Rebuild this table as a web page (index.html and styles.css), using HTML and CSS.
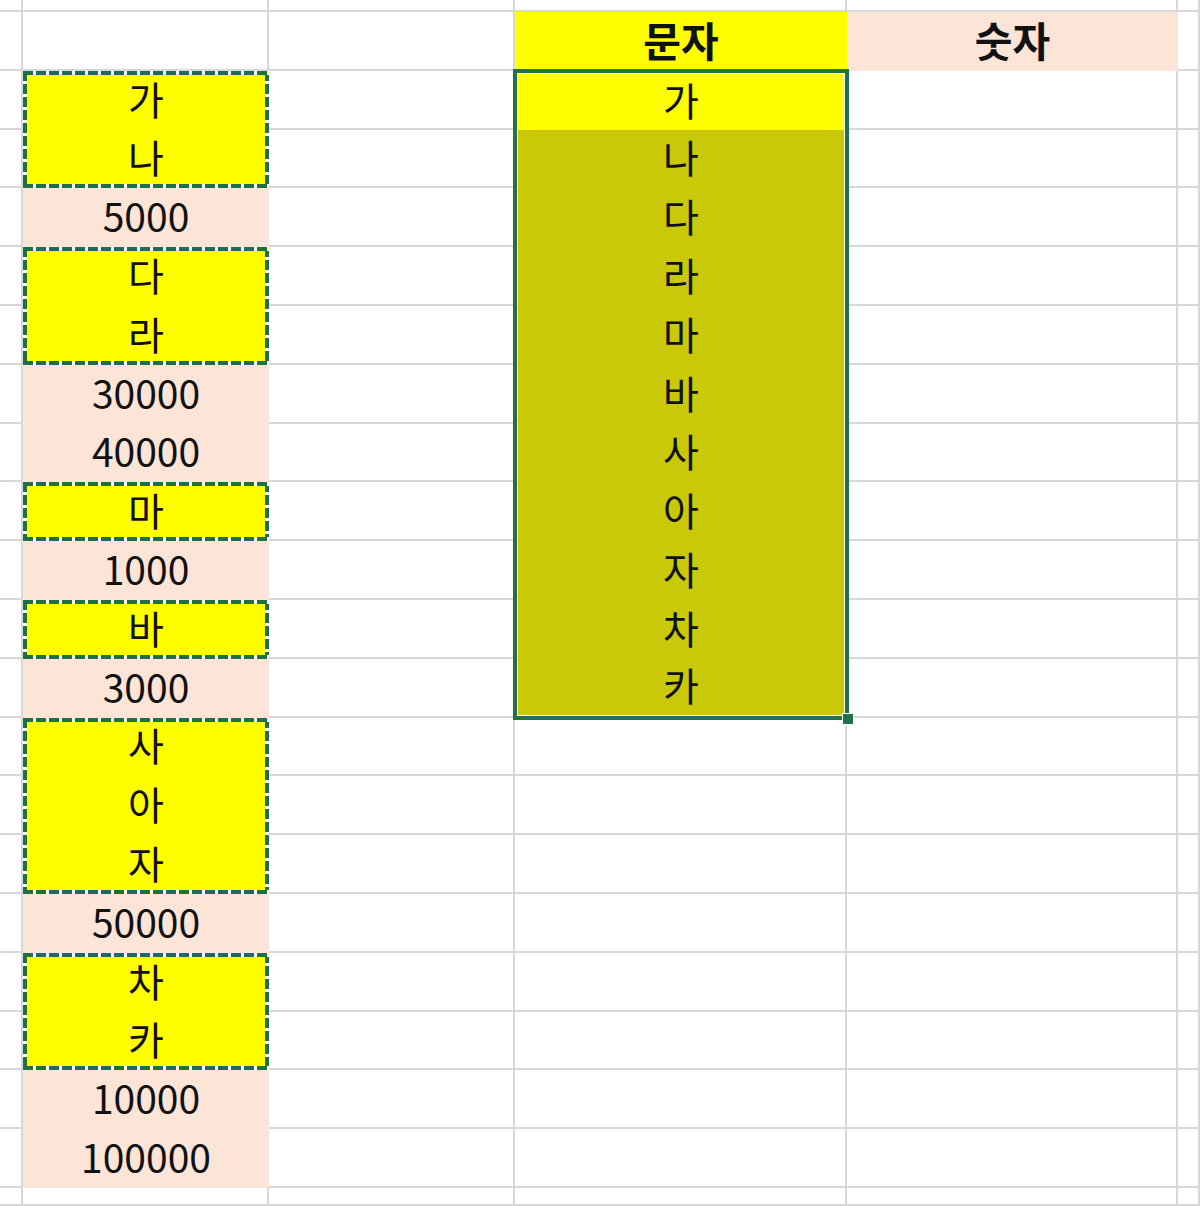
FILE: index.html
```html
<!DOCTYPE html>
<html lang="ko">
<head>
<meta charset="utf-8">
<title>Sheet</title>
<link rel="stylesheet" href="styles.css">
</head>
<body>
<div class="sheet">
  <!-- row 0 (partial) -->
  <div class="c"></div><div class="c"></div><div class="c"></div><div class="c"></div><div class="c"></div><div class="c"></div>
  <!-- row 1 -->
  <div class="c"></div><div class="c"></div><div class="c"></div>
  <div class="hd yellow">문자</div>
  <div class="hd peach">숫자</div>
  <div class="c"></div>
  <!-- row 2 -->
  <div class="c"></div>
  <div class="grp span2"><div class="t">가</div><div class="t">나</div></div>
  <div class="c"></div>
  <div class="sel">
    <div class="t active">가</div>
    <div class="t">나</div>
    <div class="t">다</div>
    <div class="t">라</div>
    <div class="t">마</div>
    <div class="t">바</div>
    <div class="t">사</div>
    <div class="t">아</div>
    <div class="t">자</div>
    <div class="t">차</div>
    <div class="t">카</div>
  </div>
  <div class="c"></div><div class="c"></div>
  <!-- row 3 -->
  <div class="c"></div><div class="c"></div><div class="c"></div><div class="c"></div>
  <!-- row 4 -->
  <div class="c"></div><div class="num">5000</div><div class="c"></div><div class="c"></div><div class="c"></div>
  <!-- row 5 -->
  <div class="c"></div>
  <div class="grp span2"><div class="t">다</div><div class="t">라</div></div>
  <div class="c"></div><div class="c"></div><div class="c"></div>
  <!-- row 6 -->
  <div class="c"></div><div class="c"></div><div class="c"></div><div class="c"></div>
  <!-- row 7 -->
  <div class="c"></div><div class="num">30000</div><div class="c"></div><div class="c"></div><div class="c"></div>
  <!-- row 8 -->
  <div class="c"></div><div class="num">40000</div><div class="c"></div><div class="c"></div><div class="c"></div>
  <!-- row 9 -->
  <div class="c"></div>
  <div class="grp"><div class="t">마</div></div>
  <div class="c"></div><div class="c"></div><div class="c"></div>
  <!-- row 10 -->
  <div class="c"></div><div class="num">1000</div><div class="c"></div><div class="c"></div><div class="c"></div>
  <!-- row 11 -->
  <div class="c"></div>
  <div class="grp"><div class="t">바</div></div>
  <div class="c"></div><div class="c"></div><div class="c"></div>
  <!-- row 12 -->
  <div class="c"></div><div class="num">3000</div><div class="c"></div><div class="c"></div><div class="c"></div>
  <!-- row 13 -->
  <div class="c"></div>
  <div class="grp span3"><div class="t">사</div><div class="t">아</div><div class="t">자</div></div>
  <div class="c"></div><div class="c"></div><div class="c"></div><div class="c"></div>
  <!-- row 14 -->
  <div class="c"></div><div class="c"></div><div class="c"></div><div class="c"></div><div class="c"></div>
  <!-- row 15 -->
  <div class="c"></div><div class="c"></div><div class="c"></div><div class="c"></div><div class="c"></div>
  <!-- row 16 -->
  <div class="c"></div><div class="num">50000</div><div class="c"></div><div class="c"></div><div class="c"></div><div class="c"></div>
  <!-- row 17 -->
  <div class="c"></div>
  <div class="grp span2"><div class="t">차</div><div class="t">카</div></div>
  <div class="c"></div><div class="c"></div><div class="c"></div><div class="c"></div>
  <!-- row 18 -->
  <div class="c"></div><div class="c"></div><div class="c"></div><div class="c"></div><div class="c"></div>
  <!-- row 19 -->
  <div class="c"></div><div class="num">10000</div><div class="c"></div><div class="c"></div><div class="c"></div><div class="c"></div>
  <!-- row 20 -->
  <div class="c"></div><div class="num">100000</div><div class="c"></div><div class="c"></div><div class="c"></div><div class="c"></div>
  <!-- row 21 (partial) -->
  <div class="c"></div><div class="c"></div><div class="c"></div><div class="c"></div><div class="c"></div><div class="c"></div>
</div>
</body>
</html>
```
FILE: styles.css
```css
html, body {
  margin: 0;
  padding: 0;
  background: #ffffff;
}
body {
  width: 1200px;
  height: 1206px;
  overflow: hidden;
  font-family: "Noto Sans CJK KR", "Noto Sans", sans-serif;
  color: #111111;
}
.sheet {
  display: grid;
  grid-template-columns: 23px 246px 246px 332px 331px 1fr;
  grid-template-rows: 12px repeat(20, 58.8px) 1fr;
  width: 1200px;
  height: 1206px;
}
.sheet > div {
  box-sizing: border-box;
  min-width: 0;
  min-height: 0;
}
.c {
  border-right: 2px solid #d8d8d8;
  border-bottom: 2px solid #d8d8d8;
}
.hd {
  display: flex;
  align-items: center;
  justify-content: center;
  font-size: 41px;
  line-height: 1;
  font-weight: 700;
  padding-bottom: 4px;
}
.yellow { background: #ffff00; }
.peach { background: #fce4d6; }
.num {
  display: flex;
  align-items: center;
  justify-content: center;
  background: #fce4d6;
  font-size: 39px;
  line-height: 1;
  padding-bottom: 4px;
}
.grp {
  display: grid;
  grid-auto-rows: minmax(0, 1fr);
  background:
    repeating-linear-gradient(90deg, #1f6f45 0 10px, #ffffff 10px 13px) left top / 100% 4px no-repeat,
    repeating-linear-gradient(90deg, #1f6f45 0 10px, #ffffff 10px 13px) left bottom / 100% 4px no-repeat,
    repeating-linear-gradient(180deg, #1f6f45 0 10px, #ffffff 10px 13px) left top / 4px 100% no-repeat,
    repeating-linear-gradient(180deg, #1f6f45 0 10px, #ffffff 10px 13px) right top / 4px 100% no-repeat,
    #ffff00;
}
.span2 { grid-row: span 2; }
.span3 { grid-row: span 3; }
.t {
  display: flex;
  align-items: center;
  justify-content: center;
  font-size: 39px;
  line-height: 1;
  padding-bottom: 4px;
  min-height: 0;
}
.sel {
  grid-row: span 11;
  position: relative;
  z-index: 1;
  display: grid;
  grid-template-rows: repeat(11, minmax(0, 1fr));
  background: #c9c90a;
  outline: 4px solid #217346;
  outline-offset: -2px;
  box-shadow: inset 0 0 0 3px #ffffff;
}
.sel .t {
  background: #c9c90a;
  margin-left: 3px;
  margin-right: 3px;
}
.sel .t.active {
  background: #ffff00;
  margin-top: 3px;
}
.sel .t:last-child {
  margin-bottom: 3px;
}
.sel::after {
  content: "";
  position: absolute;
  right: -7px;
  bottom: -7px;
  width: 10px;
  height: 10px;
  background: #217346;
  border: 1px solid #ffffff;
}
```
